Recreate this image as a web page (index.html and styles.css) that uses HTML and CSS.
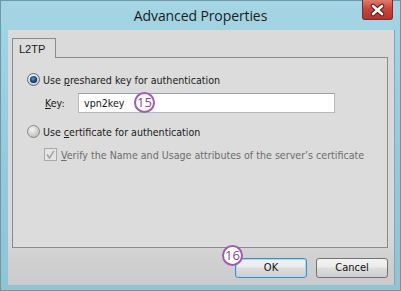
FILE: index.html
```html
<!DOCTYPE html>
<html>
<head>
<meta charset="utf-8">
<link rel="stylesheet" href="styles.css">
</head>
<body>
<div class="window">
  <div class="titlebar">
    <span class="spacer"></span>
    <span class="title">Advanced Properties</span>
    <span class="close">
      <svg width="29" height="20" viewBox="0 0 29 20">
        <path d="M10 6 L19 14 M19 6 L10 14" stroke="#5a1a16" stroke-width="4.6" stroke-linecap="round"/>
        <path d="M10 6 L19 14 M19 6 L10 14" stroke="#ffffff" stroke-width="2.6" stroke-linecap="round"/>
      </svg>
    </span>
  </div>
  <div class="client">
    <div class="tabs">
      <div class="tab">L2TP</div>
    </div>
    <div class="panel">
      <div class="row">
        <svg class="radio" width="13" height="13" viewBox="0 0 13 13">
          <defs>
            <radialGradient id="rg1" cx="0.4" cy="0.35" r="0.7">
              <stop offset="0" stop-color="#ffffff"/>
              <stop offset="1" stop-color="#b9c4cc"/>
            </radialGradient>
            <radialGradient id="rg2" cx="0.45" cy="0.4" r="0.6">
              <stop offset="0" stop-color="#5aa0d8"/>
              <stop offset="0.6" stop-color="#1d4f80"/>
              <stop offset="1" stop-color="#0d2745"/>
            </radialGradient>
          </defs>
          <circle cx="6.5" cy="6.5" r="6" fill="url(#rg1)" stroke="#5f6a72" stroke-width="1"/>
          <circle cx="6.5" cy="6.5" r="3.6" fill="url(#rg2)"/>
        </svg>
        <span class="lbl">Use <u>p</u>reshared key for authentication</span>
      </div>
      <div class="row keyrow">
        <span class="keylbl"><u>K</u>ey:</span>
        <div class="input">vpn2key</div>
        <span class="badge b15">15</span>
      </div>
      <div class="row r3">
        <svg class="radio" width="13" height="13" viewBox="0 0 13 13">
          <defs>
            <radialGradient id="rg3" cx="0.4" cy="0.35" r="0.7">
              <stop offset="0" stop-color="#f6f6f6"/>
              <stop offset="1" stop-color="#b8b8b8"/>
            </radialGradient>
          </defs>
          <circle cx="6.5" cy="6.5" r="6" fill="url(#rg3)" stroke="#8a8a8a" stroke-width="1"/>
        </svg>
        <span class="lbl">Use <u>c</u>ertificate for authentication</span>
      </div>
      <div class="row r4">
        <svg class="check" width="13" height="13" viewBox="0 0 13 13">
          <rect x="0.5" y="0.5" width="12" height="12" fill="#e4e4e4" stroke="#a9a9a9"/>
          <path d="M3 6.5 L5.5 10 L10 2.8" fill="none" stroke="#a6a6a6" stroke-width="1.6"/>
        </svg>
        <span class="lbl dis"><u>V</u>erify the Name and Usage attributes of the server’s certificate</span>
      </div>
    </div>
    <div class="buttons">
      <div class="btnwrap">
        <span class="badge b16">16</span>
        <div class="btn ok">OK</div>
      </div>
      <div class="btn">Cancel</div>
    </div>
  </div>
</div>
</body>
</html>
```
FILE: styles.css
```css
html, body {
  margin: 0;
  padding: 0;
}
body {
  width: 401px;
  height: 291px;
  overflow: hidden;
  font-family: "DejaVu Sans Condensed", "DejaVu Sans", sans-serif;
  font-size: 10.6px;
  color: #1a1a1a;
}
.window {
  box-sizing: border-box;
  width: 401px;
  height: 291px;
  background: linear-gradient(#a4d5e4, #93c9da 60%, #8fc4d5);
  border: 1px solid #6f98a6;
  display: flex;
  flex-direction: column;
}
.titlebar {
  height: 29px;
  display: grid;
  grid-template-columns: 1fr auto 1fr;
}
.title {
  font-family: "Open Sans", "Noto Sans", sans-serif;
  font-size: 14px;
  color: #1c1c1c;
  line-height: 30px;
  letter-spacing: -0.1px;
}
.close {
  justify-self: end;
  align-self: start;
  width: 29px;
  height: 19px;
  margin-right: 7px;
  margin-top: -1px;
  background: linear-gradient(#e07a6e, #c9463b 45%, #b8322a);
  border: 1px solid #7d2b24;
  border-top: none;
  border-radius: 0 0 3px 3px;
  display: flex;
}
.client {
  flex: 1;
  margin: 0 5px 5px 7px;
  background: linear-gradient(#dadada, #dadada 80%, #d0d0d0 90%, #cbcbcb);
  display: flex;
  flex-direction: column;
  border-right: 1px solid #7fa8b5;
}
.tabs {
  padding: 8px 0 0 4px;
  display: flex;
  height: 19px;
}
.tab {
  width: 44px;
  height: 20px;
  box-sizing: border-box;
  border: 1px solid #8b8b8b;
  border-bottom: none;
  background: #dcdcdc;
  padding: 4px 0 0 6px;
  font-family: "Liberation Sans", sans-serif;
  font-size: 11px;
  position: relative;
  z-index: 1;
}
.panel {
  margin: 0 6px 0 4px;
  height: 191px;
  box-sizing: border-box;
  border: 1px solid #8b8b8b;
  background: #dcdcdc;
  padding: 15px 0 0 14px;
  display: flex;
  flex-direction: column;
}
.row {
  display: flex;
  align-items: center;
  height: 13px;
}
.lbl {
  margin-left: 3px;
  white-space: nowrap;
}
.keyrow {
  height: 20px;
  margin-top: 7px;
  margin-left: 18px;
  position: relative;
}
.keylbl {
  width: 33px;
}
.input {
  width: 257px;
  height: 20px;
  box-sizing: border-box;
  background: #fff;
  border: 1px solid #b5b9c0;
  border-top-color: #9aa0a8;
  padding-left: 5px;
  line-height: 18px;
}
.r3 {
  margin-top: 12px;
}
.r4 {
  margin-top: 10px;
  margin-left: 17px;
}
.r4 .lbl {
  margin-left: 4px;
}
.dis {
  color: #6d6d6d;
}
.badge {
  position: absolute;
  box-sizing: border-box;
  width: 21px;
  height: 21px;
  border: 2px solid #a05bb0;
  border-radius: 50%;
  background: #fff;
  color: #8a3f9c;
  font-family: "Open Sans", sans-serif;
  font-size: 13px;
  line-height: 17px;
  text-align: center;
}
.b15 {
  left: 89px;
  top: -1px;
}
.buttons {
  display: flex;
  justify-content: flex-end;
  gap: 9px;
  margin: 10px 6px 0 0;
}
.btnwrap {
  position: relative;
}
.btn {
  width: 72px;
  height: 20px;
  box-sizing: border-box;
  border: 1px solid #727272;
  border-radius: 3px;
  background: linear-gradient(#f2f2f2, #ebebeb 45%, #dddddd 50%, #cfcfcf);
  text-align: center;
  line-height: 18px;
  font-size: 11px;
  color: #111;
}
.ok {
  border-color: #3a8fd1;
  box-shadow: inset 0 0 0 1px #a9d6f5;
}
.b16 {
  left: -13px;
  top: -13px;
  z-index: 2;
}
```
